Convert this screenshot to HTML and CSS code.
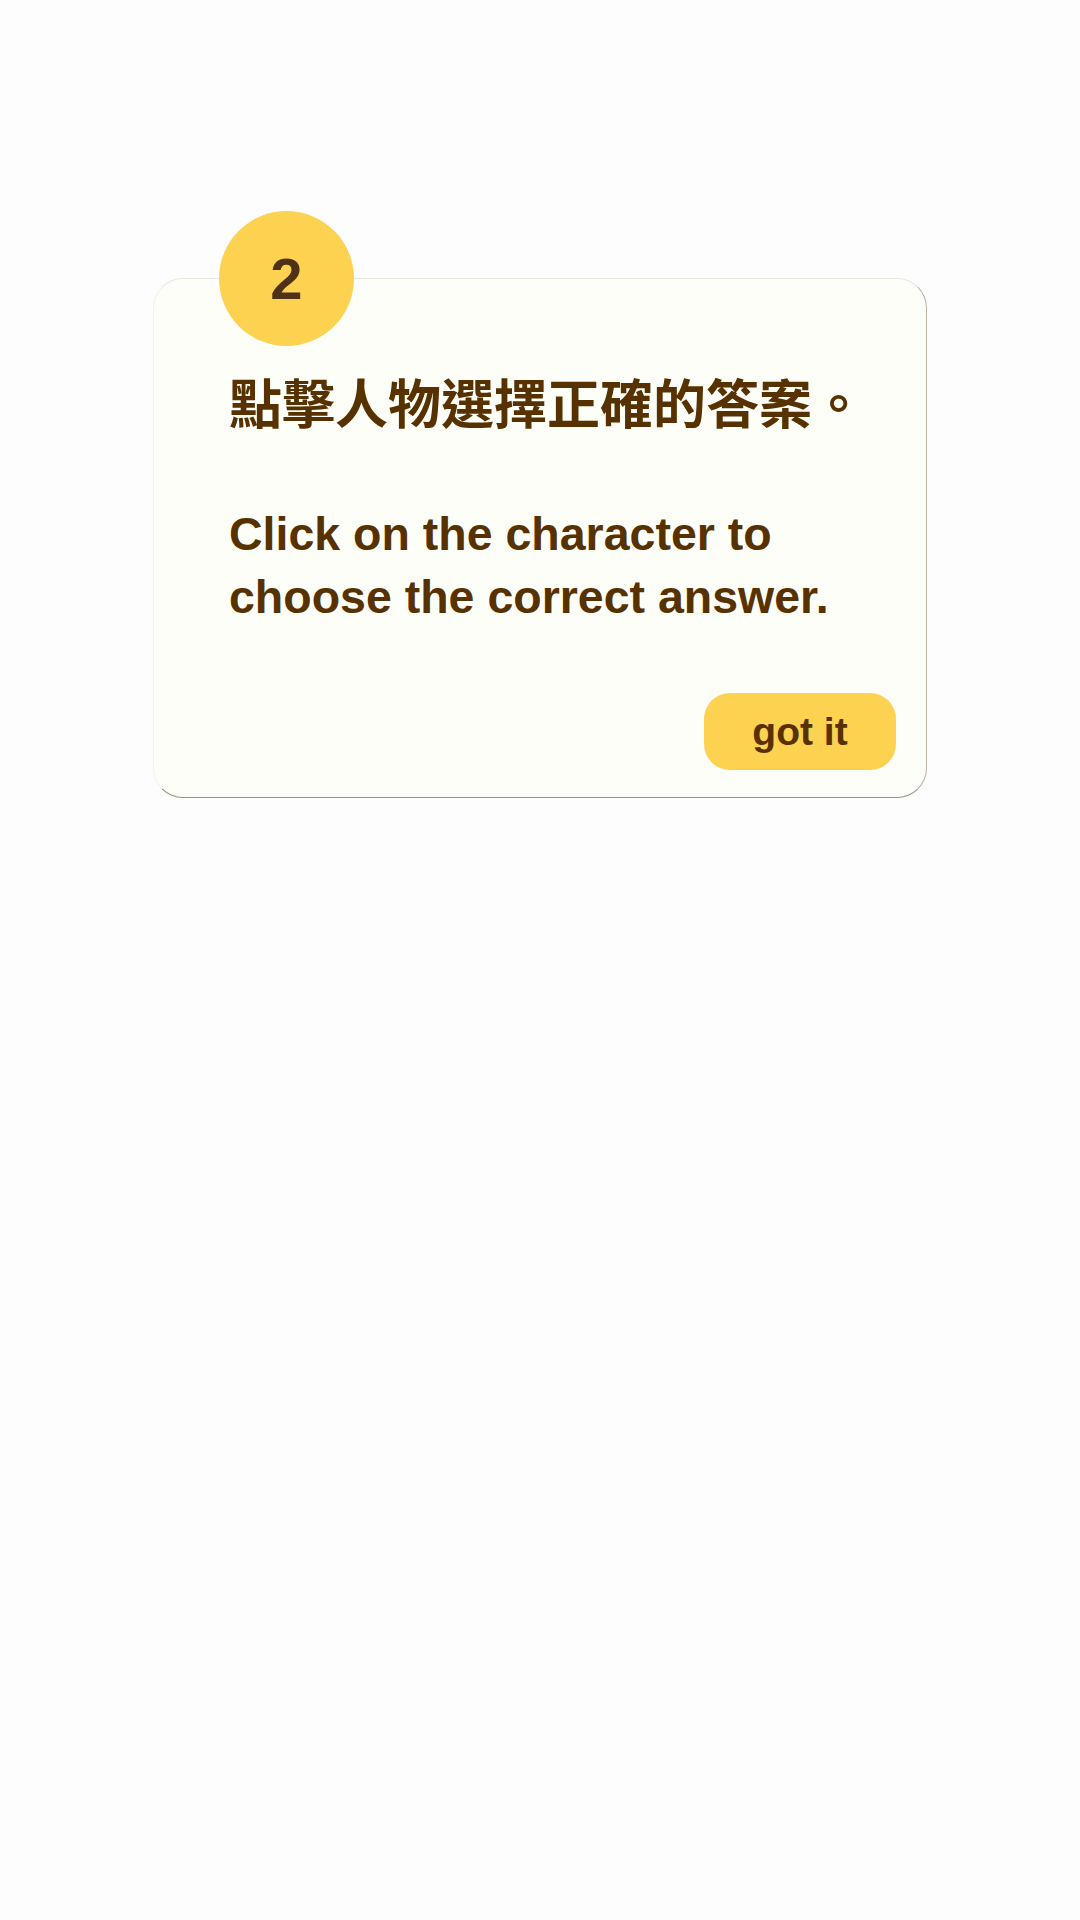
FILE: index.html
```html
<!DOCTYPE html>
<html lang="zh-Hant">
<head>
<meta charset="utf-8">
<title>Tip</title>
<link rel="stylesheet" href="styles.css">
</head>
<body>
<div class="page">
  <div class="card">
    <div class="step">2</div>
    <p class="zh">點擊人物選擇正確的答案。</p>
    <p class="en">Click on the character to<br>choose the correct answer.</p>
    <div class="actions">
      <button class="got">got it</button>
    </div>
  </div>
</div>
</body>
</html>
```

FILE: styles.css
```css
html, body {
  margin: 0;
  padding: 0;
  background: #fdfdfd;
}
.page {
  width: 1080px;
  height: 1920px;
  padding-top: 278px;
  box-sizing: border-box;
  display: flex;
  flex-direction: column;
  align-items: center;
}
.card {
  position: relative;
  width: 774px;
  box-sizing: border-box;
  background: #fefef8;
  border-radius: 30px;
  border-top: 1px solid #ebe7de;
  border-right: 1px solid #bab3a5;
  border-bottom: 1px solid #9a9282;
  border-left: 1px solid #f3f1ea;
  padding: 90px 30px 27px 75px;
  color: #573200;
  font-family: "Liberation Sans", Arial, "Noto Sans CJK TC", sans-serif;
}
.step {
  position: absolute;
  left: 65px;
  top: -68px;
  width: 135px;
  height: 135px;
  border-radius: 50%;
  background: #fdd250;
  color: #4f3216;
  font-family: "Liberation Sans", Arial, sans-serif;
  font-weight: bold;
  font-size: 58px;
  display: flex;
  align-items: center;
  justify-content: center;
  line-height: 1;
}
.zh {
  margin: 0;
  font-family: "Noto Sans CJK TC", "Noto Sans CJK SC", sans-serif;
  font-weight: bold;
  font-size: 53px;
  line-height: 64px;
  white-space: nowrap;
}
.en {
  margin: 70px 0 0 0;
  font-family: "Liberation Sans", Arial, sans-serif;
  font-weight: bold;
  font-size: 46.5px;
  line-height: 63px;
}
.actions {
  display: flex;
  justify-content: flex-end;
  margin-top: 64px;
}
.got {
  width: 192px;
  height: 77px;
  border: none;
  border-radius: 26px;
  background: #fdd250;
  color: #573200;
  font-family: "Liberation Sans", Arial, sans-serif;
  font-weight: bold;
  font-size: 39px;
  line-height: 77px;
  padding: 0;
}
```
